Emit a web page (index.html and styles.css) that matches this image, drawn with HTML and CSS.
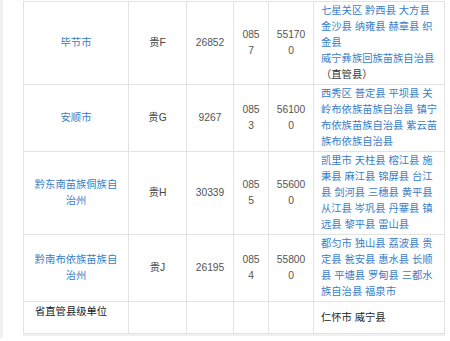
FILE: index.html
```html
<!DOCTYPE html>
<html lang="zh">
<head>
<meta charset="utf-8">
<title>贵州行政区划</title>
<link rel="stylesheet" href="styles.css">
</head>
<body>
<div class="page">
  <div class="rail"></div>
  <div class="content">
    <table class="regions">
      <colgroup>
        <col class="c-name">
        <col class="c-plate">
        <col class="c-area">
        <col class="c-code">
        <col class="c-zip">
        <col class="c-sub">
      </colgroup>
      <tbody>
        <tr>
          <td class="center"><a href="#">毕节市</a></td>
          <td class="center">贵F</td>
          <td class="center num">26852</td>
          <td class="center num">0857</td>
          <td class="center num">551700</td>
          <td class="sub"><a href="#">七星关区</a> <a href="#">黔西县</a> <a href="#">大方县</a> <a href="#">金沙县</a> <a href="#">纳雍县</a> <a href="#">赫章县</a> <a href="#">织金县</a><br><a href="#">威宁彝族回族苗族自治县</a>（直管县）</td>
        </tr>
        <tr>
          <td class="center"><a href="#">安顺市</a></td>
          <td class="center">贵G</td>
          <td class="center num">9267</td>
          <td class="center num">0853</td>
          <td class="center num">561000</td>
          <td class="sub"><a href="#">西秀区</a> <a href="#">普定县</a> <a href="#">平坝县</a> <a href="#">关岭布依族苗族自治县</a> <a href="#">镇宁布依族苗族自治县</a> <a href="#">紫云苗族布依族自治县</a></td>
        </tr>
        <tr>
          <td class="center"><a href="#">黔东南苗族侗族自治州</a></td>
          <td class="center">贵H</td>
          <td class="center num">30339</td>
          <td class="center num">0855</td>
          <td class="center num">556000</td>
          <td class="sub"><a href="#">凯里市</a> <a href="#">天柱县</a> <a href="#">榕江县</a> <a href="#">施秉县</a> <a href="#">麻江县</a> <a href="#">锦屏县</a> <a href="#">台江县</a> <a href="#">剑河县</a> <a href="#">三穗县</a> <a href="#">黄平县</a> <a href="#">从江县</a> <a href="#">岑巩县</a> <a href="#">丹寨县</a> <a href="#">镇远县</a> <a href="#">黎平县</a> <a href="#">雷山县</a></td>
        </tr>
        <tr>
          <td class="center"><a href="#">黔南布依族苗族自治州</a></td>
          <td class="center">贵J</td>
          <td class="center num">26195</td>
          <td class="center num">0854</td>
          <td class="center num">558000</td>
          <td class="sub"><a href="#">都匀市</a> <a href="#">独山县</a> <a href="#">荔波县</a> <a href="#">贵定县</a> <a href="#">瓮安县</a> <a href="#">惠水县</a> <a href="#">长顺县</a> <a href="#">平塘县</a> <a href="#">罗甸县</a> <a href="#">三都水族自治县</a> <a href="#">福泉市</a></td>
        </tr>
        <tr class="last">
          <td class="label">省直管县级单位</td>
          <td></td>
          <td></td>
          <td></td>
          <td></td>
          <td class="sub plain">仁怀市 威宁县</td>
        </tr>
      </tbody>
    </table>
    <div class="shade"></div>
  </div>
</div>
</body>
</html>
```

FILE: styles.css
```css
html, body {
  margin: 0;
  padding: 0;
  background: #ffffff;
}

body {
  font-family: "Liberation Sans", "Noto Sans CJK SC", sans-serif;
  font-size: 10.3px;
  line-height: 16px;
  color: #444444;
}

.page {
  display: flex;
  gap: 20px;
  align-items: flex-start;
}

.rail {
  width: 3px;
  height: 338px;
  background: #f1f1f1;
  flex: none;
}

.content {
  padding-top: 1px;
}

.regions {
  border-collapse: collapse;
  table-layout: fixed;
  width: 422px;
  word-break: break-all;
}

.c-name { width: 105px; }
.c-plate { width: 58px; }
.c-area { width: 47px; }
.c-code { width: 35px; }
.c-zip { width: 45px; }
.c-sub { width: 131px; }

.regions td {
  border: 1px solid #e3e3e3;
  padding: 1px 7px;
  vertical-align: middle;
}

.regions a {
  color: #3a7dc8;
  text-decoration: none;
}

.center {
  text-align: center;
}

.num {
  color: #555555;
}

.regions td.sub {
  padding: 1px 6px 1px 7px;
  color: #333333;
}

.last td {
  height: 28px;
}

.regions td.label {
  vertical-align: top;
  padding: 2px 7px 1px 11px;
  color: #222222;
}

.regions td.plain {
  color: #222222;
}

.shade {
  width: 422px;
  height: 2px;
  background: #f0f0f0;
}
```
